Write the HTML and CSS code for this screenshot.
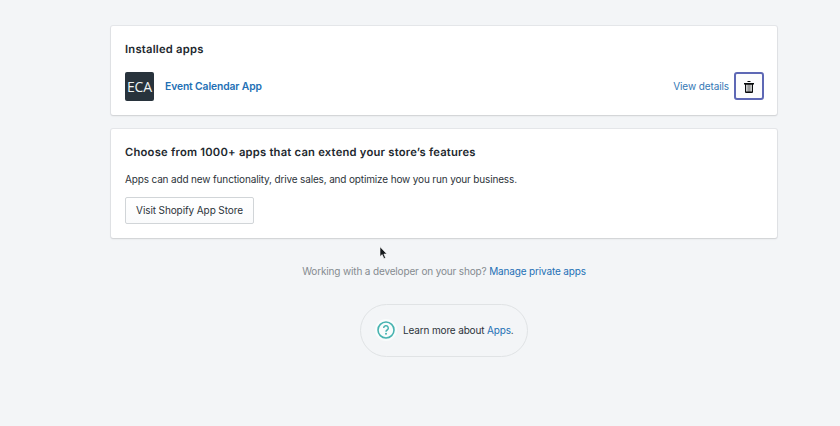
FILE: index.html
```html
<!DOCTYPE html>
<html lang="en">
<head>
<meta charset="utf-8">
<title>Apps</title>
<link rel="stylesheet" href="styles.css">
</head>
<body>
<main class="page">
  <section class="card installed">
    <h2 class="title">Installed apps</h2>
    <div class="app-row">
      <div class="app-icon"><span>ECA</span></div>
      <a class="app-name">Event Calendar App</a>
      <a class="details">View details</a>
      <button class="delete" aria-label="Delete">
        <svg width="12" height="14" viewBox="0 0 12 14" fill="#080a0c"><path d="M4.500 2h3v1h-3zM1 4h10v1.500H1z"/><path fill-rule="evenodd" d="M2 5h8v8a1 1 0 0 1-1 1H3a1 1 0 0 1-1-1zM3.200 5.500v7h1.500v-7zM5.400 5.500v7h1.200v-7zM7.300 5.500v7h1.500v-7z"/></svg>
      </button>
    </div>
  </section>
  <section class="card store">
    <h2 class="title">Choose from 1000+ apps that can extend your store’s features</h2>
    <p class="text">Apps can add new functionality, drive sales, and optimize how you run your business.</p>
    <button class="visit">Visit Shopify App Store</button>
  </section>
  <p class="developer">Working with a developer on your shop? <a>Manage private apps</a></p>
  <div class="help">
    <svg class="help-icon" width="22" height="22" viewBox="0 0 22 22" fill="none"><circle cx="11" cy="11" r="11" fill="#f9fcfc"/><circle cx="11" cy="11" r="8" stroke="#47b3b0" stroke-width="1.600"/><path d="M8.700 9.100a2.300 2.300 0 1 1 3.500 1.900c-.8.500-1.200.8-1.200 1.700" stroke="#47b3b0" stroke-width="1.500"/><circle cx="11" cy="14.800" r="1" fill="#47b3b0"/></svg>
    <span class="help-text">Learn more about <a>Apps</a>.</span>
  </div>
</main>
<svg class="cursor" width="9" height="14" viewBox="0 0 9 14"><path d="M1 .8v9.800l2.200-2 1.700 4 1.700-.7-1.700-3.900h3z" fill="#15191c" stroke="#f8f8f8" stroke-width=".6"/></svg>
</body>
</html>
```
FILE: styles.css
```css
* { box-sizing: border-box; }
body {
  margin: 0;
  height: 426px;
  overflow: hidden;
  background: #f3f5f7;
  color: #2c333a;
  font: 400 10px/16px Inter, "Liberation Sans", sans-serif;
  letter-spacing: -.15px;
}
h2, p { margin: 0; }
a { color: #2370b5; white-space: nowrap; }
button { font: inherit; color: inherit; padding: 0; }
.page {
  width: 666px;
  margin: 26px 0 0 111px;
  display: flex;
  flex-direction: column;
}
.card {
  background: #fff;
  border-radius: 2px;
  box-shadow: 0 0 0 1px rgba(63, 63, 68, .07), 0 1px 2px rgba(63, 63, 68, .14);
  padding: 0 14px;
  white-space: nowrap;
}
.installed { height: 88.5px; padding-top: 14px; }
.store { height: 109px; margin-top: 14.5px; padding-top: 14px; }
.title {
  font-size: 11.2px;
  line-height: 18px;
  font-weight: 600;
  letter-spacing: .23px;
  color: #22282e;
  text-rendering: geometricPrecision;
}
.app-row { display: flex; align-items: center; margin-top: 14px; height: 29px; }
.app-icon {
  width: 29px;
  height: 29px;
  border-radius: 2px;
  background: #28333c;
  color: #eef3f5;
  display: flex;
  align-items: center;
  justify-content: center;
  font: 14px/29px "Open Sans", sans-serif;
}
.app-name {
  margin: -1px 0 0 11px;
  font-weight: 600;
  font-size: 10.3px;
  letter-spacing: -.1px;
}
.details { margin: -1px 0 0 auto; color: #3478b5; letter-spacing: -.1px; }
.delete {
  width: 30px;
  height: 28px;
  margin: -1px -1px 0 5px;
  border: 2px solid #5e68b5;
  border-radius: 3px;
  background: #fcfcfd;
  display: flex;
  align-items: center;
  justify-content: center;
}
.text { margin-top: 10px; }
.visit {
  display: block;
  width: 129px;
  height: 27px;
  margin-top: 10px;
  padding-bottom: 1px;
  border: 1px solid #d1d5d8;
  border-radius: 2px;
  background: linear-gradient(#fff, #fafbfc);
  letter-spacing: -.1px;
}
.developer { margin-top: 25px; text-align: center; color: #858b90; }
.help {
  align-self: center;
  width: 168px;
  height: 53px;
  margin-top: 25px;
  border: 1px solid #e0e3e5;
  border-radius: 27px;
  display: flex;
  align-items: center;
  padding-left: 14px;
  white-space: nowrap;
}
.help-icon { margin: -1px 6px 0 0; }
.help-text { margin-top: -2px; }
.cursor { position: absolute; left: 379px; top: 246px; }
```
